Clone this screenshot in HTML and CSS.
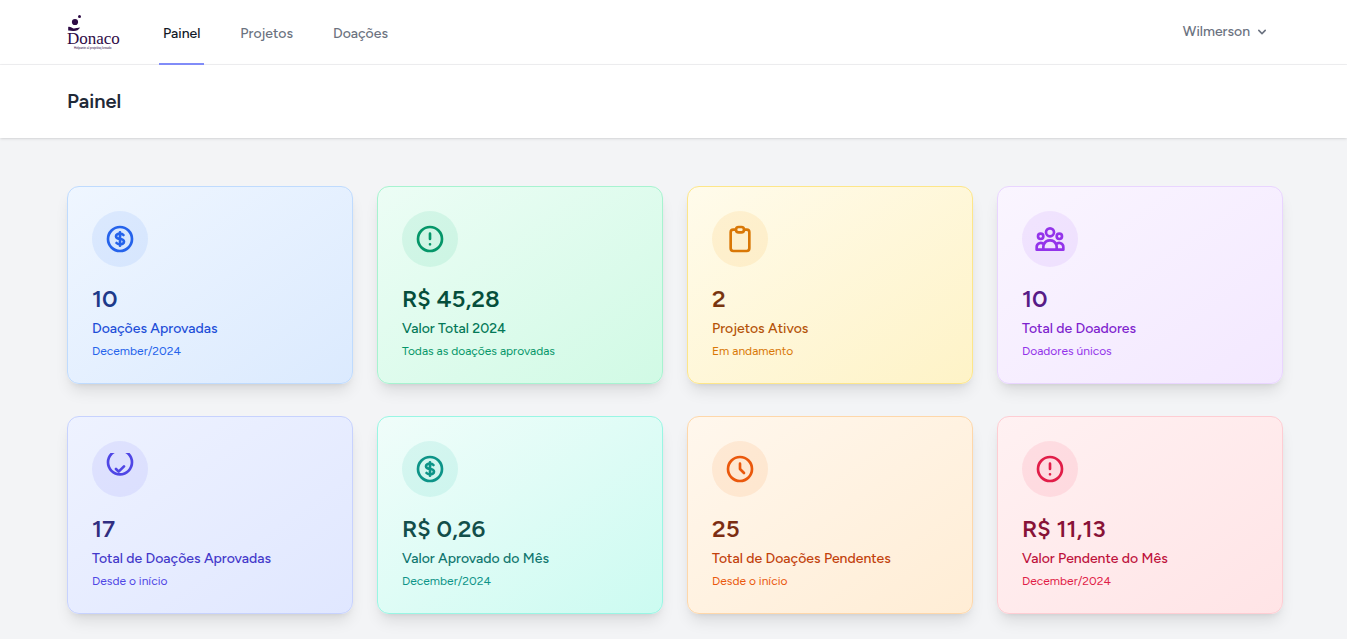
FILE: index.html
```html
<!DOCTYPE html>
<html lang="pt-BR">
<head>
<meta charset="utf-8">
<meta name="viewport" content="width=device-width, initial-scale=1">
<title>Painel - Donaco</title>
<link rel="stylesheet" href="styles.css">
</head>
<body>
<svg class="sprite" aria-hidden="true">
  <symbol id="dollar" viewBox="0 0 24 24"><path d="M12 8c-1.657 0-3 .895-3 2s1.343 2 3 2 3 .895 3 2-1.343 2-3 2m0-8c1.11 0 2.08.402 2.599 1M12 8V7m0 1v8m0 0v1m0-1c-1.11 0-2.08-.402-2.599-1M21 12a9 9 0 11-18 0 9 9 0 0118 0z"/></symbol>
  <symbol id="alert" viewBox="0 0 24 24"><path d="M12 8v4m0 4h.01M21 12a9 9 0 11-18 0 9 9 0 0118 0z"/></symbol>
  <symbol id="clipboard" viewBox="0 0 24 24"><path d="M9 5H7a2 2 0 00-2 2v12a2 2 0 002 2h10a2 2 0 002-2V7a2 2 0 00-2-2h-2M9 5a2 2 0 002 2h2a2 2 0 002-2M9 5a2 2 0 012-2h2a2 2 0 012 2"/></symbol>
  <symbol id="group" viewBox="0 0 24 24"><path d="M17 20h5v-2a3 3 0 00-5.356-1.857M17 20H7m10 0v-2c0-.656-.126-1.283-.356-1.857M7 20H2v-2a3 3 0 015.356-1.857M7 20v-2c0-.656.126-1.283.356-1.857m0 0a5.002 5.002 0 019.288 0M15 7a3 3 0 11-6 0 3 3 0 016 0zm6 3a2 2 0 11-4 0 2 2 0 014 0zM7 10a2 2 0 11-4 0 2 2 0 014 0z"/></symbol>
  <symbol id="check" viewBox="0 0 24 24"><path d="M9 12l2 2 4-4M21 7a9 9 0 11-18 0 9 9 0 0118 0z"/></symbol>
  <symbol id="clock" viewBox="0 0 24 24"><path d="M12 8v4l3 3M21 12a9 9 0 11-18 0 9 9 0 0118 0z"/></symbol>
</svg>

<nav class="topbar">
  <div class="container topbar-row">
    <a class="logo" href="#" aria-label="Donaco">
      <svg viewBox="0 0 54 36" width="54" height="36">
        <circle cx="12.500" cy="2.500" r="1.500"/>
        <circle cx="8" cy="8" r="3.100"/>
        <path d="M1.200 13c1.700-.5 3.200.6 4.700 1.200 1.400.5 2.500-.1 3.800-.3 1.200.1 2.100-.4 3.400-.5-1.400 2.700-4.400 3.900-7.200 3.500-1.800-.3-2.900-.6-4.700-.5z"/>
        <text class="logo-name" x="0" y="30">Donaco</text>
        <text class="logo-tag" x="7" y="35">Helpante al projektoj kreado</text>
      </svg>
    </a>
    <div class="links">
      <a class="link active" href="#" aria-current="page">Painel</a>
      <a class="link" href="#">Projetos</a>
      <a class="link" href="#">Doações</a>
    </div>
    <button class="user" type="button">Wilmerson
      <svg viewBox="0 0 20 20" width="16" height="16" aria-hidden="true"><path d="M5.293 7.293a1 1 0 011.414 0L10 10.586l3.293-3.293a1 1 0 111.414 1.414l-4 4a1 1 0 01-1.414 0l-4-4a1 1 0 010-1.414z"/></svg>
    </button>
  </div>
</nav>

<header class="page-head">
  <div class="container"><h1>Painel</h1></div>
</header>

<main class="container cards">
  <article class="card blue">
    <span class="badge"><svg class="icon"><use href="#dollar"/></svg></span>
    <strong>10</strong><h2>Doações Aprovadas</h2><p>December/2024</p>
  </article>
  <article class="card emerald">
    <span class="badge"><svg class="icon"><use href="#alert"/></svg></span>
    <strong>R$ 45,28</strong><h2>Valor Total 2024</h2><p>Todas as doações aprovadas</p>
  </article>
  <article class="card amber">
    <span class="badge"><svg class="icon"><use href="#clipboard"/></svg></span>
    <strong>2</strong><h2>Projetos Ativos</h2><p>Em andamento</p>
  </article>
  <article class="card purple">
    <span class="badge"><svg class="icon"><use href="#group"/></svg></span>
    <strong>10</strong><h2>Total de Doadores</h2><p>Doadores únicos</p>
  </article>
  <article class="card indigo">
    <span class="badge"><svg class="icon"><use href="#check"/></svg></span>
    <strong>17</strong><h2>Total de Doações Aprovadas</h2><p>Desde o início</p>
  </article>
  <article class="card teal">
    <span class="badge"><svg class="icon"><use href="#dollar"/></svg></span>
    <strong>R$ 0,26</strong><h2>Valor Aprovado do Mês</h2><p>December/2024</p>
  </article>
  <article class="card orange">
    <span class="badge"><svg class="icon"><use href="#clock"/></svg></span>
    <strong>25</strong><h2>Total de Doações Pendentes</h2><p>Desde o início</p>
  </article>
  <article class="card rose">
    <span class="badge"><svg class="icon"><use href="#alert"/></svg></span>
    <strong>R$ 11,13</strong><h2>Valor Pendente do Mês</h2><p>December/2024</p>
  </article>
</main>
</body>
</html>
```
FILE: styles.css
```css
* { box-sizing: border-box; margin: 0; }
html { overflow-x: hidden; }
body {
  background: #f3f4f6;
  font-family: Figtree, Inter, sans-serif;
  color: #1f2937;
}
.sprite { display: none; }
.container { max-width: 1283px; margin: 0 auto; padding-left: 35px; padding-right: 32px; }

.topbar { background: #fff; border-bottom: 1px solid #f0f0f2; }
.topbar-row { display: flex; height: 64px; }
.logo { display: flex; align-items: center; margin-right: 38px; }
.logo svg { display: block; fill: #2e0a45; overflow: visible; }
.logo-name { font: 17px "Liberation Serif", serif; }
.logo-tag { font: 3px "Liberation Sans", sans-serif; }
.links { display: flex; gap: 32px; margin-bottom: -1px; }
.link {
  display: flex;
  align-items: center;
  padding: 4px 4px 0;
  border-bottom: 2px solid transparent;
  font-size: 14px;
  font-weight: 500;
  line-height: 20px;
  color: #6b7280;
  text-decoration: none;
}
.link.active { color: #111827; border-color: #818cf8; }
.user {
  display: flex;
  align-items: center;
  gap: 4px;
  margin-left: auto;
  padding: 0 13px;
  border: 0;
  background: none;
  font: 500 14px/20px Figtree, Inter, sans-serif;
  color: #6b7280;
  cursor: pointer;
}
.user svg { fill: currentColor; }

.page-head {
  padding: 24px 0;
  background: #fff;
  box-shadow: 0 1px 3px rgba(0, 0, 0, .1), 0 1px 2px -1px rgba(0, 0, 0, .1);
}
.page-head h1 { font-size: 20px; font-weight: 600; line-height: 25px; }

.cards {
  display: grid;
  grid-template-columns: repeat(4, minmax(0, 1fr));
  gap: 32px 24px;
  padding-top: 48px;
  padding-bottom: 24px;
}
.card {
  display: flex;
  flex-direction: column;
  align-items: flex-start;
  gap: 4px;
  padding: 24px;
  border: 1px solid var(--line);
  border-radius: 12px;
  background: linear-gradient(to bottom right, var(--from), var(--to));
  box-shadow: 0 10px 15px -3px rgba(0, 0, 0, .1), 0 4px 6px -4px rgba(0, 0, 0, .1);
}
.badge { display: flex; padding: 12px; margin-bottom: 12px; border-radius: 50%; background: var(--tint); }
.icon {
  width: 32px;
  height: 32px;
  fill: none;
  stroke: var(--accent);
  stroke-width: 2;
  stroke-linecap: round;
  stroke-linejoin: round;
}
.card strong { font-size: 24px; font-weight: 600; line-height: 32px; color: var(--strong); }
.card h2 { font-size: 14px; font-weight: 500; line-height: 20px; color: var(--title); }
.card p { font-size: 12px; line-height: 16px; color: var(--accent); }

.blue { --from: #eff6ff; --to: #dbeafe; --line: #bfdbfe; --tint: rgba(59, 130, 246, .1); --accent: #2563eb; --title: #1d4ed8; --strong: #1e3a8a; }
.emerald { --from: #ecfdf5; --to: #d1fae5; --line: #a7f3d0; --tint: rgba(16, 185, 129, .1); --accent: #059669; --title: #047857; --strong: #064e3b; }
.amber { --from: #fffbeb; --to: #fef3c7; --line: #fde68a; --tint: rgba(245, 158, 11, .1); --accent: #d97706; --title: #b45309; --strong: #78350f; }
.purple { --from: #faf5ff; --to: #f3e8ff; --line: #e9d5ff; --tint: rgba(168, 85, 247, .1); --accent: #9333ea; --title: #7e22ce; --strong: #581c87; }
.indigo { --from: #eef2ff; --to: #e0e7ff; --line: #c7d2fe; --tint: rgba(99, 102, 241, .1); --accent: #4f46e5; --title: #4338ca; --strong: #312e81; }
.teal { --from: #f0fdfa; --to: #ccfbf1; --line: #99f6e4; --tint: rgba(20, 184, 166, .1); --accent: #0d9488; --title: #0f766e; --strong: #134e4a; }
.orange { --from: #fff7ed; --to: #ffedd5; --line: #fed7aa; --tint: rgba(249, 115, 22, .1); --accent: #ea580c; --title: #c2410c; --strong: #7c2d12; }
.rose { --from: #fff1f2; --to: #ffe4e6; --line: #fecdd3; --tint: rgba(244, 63, 94, .1); --accent: #e11d48; --title: #be123c; --strong: #881337; }

@media (max-width: 1023px) {
  .cards { grid-template-columns: repeat(2, minmax(0, 1fr)); }
}
@media (max-width: 639px) {
  .cards { grid-template-columns: minmax(0, 1fr); }
}
```
